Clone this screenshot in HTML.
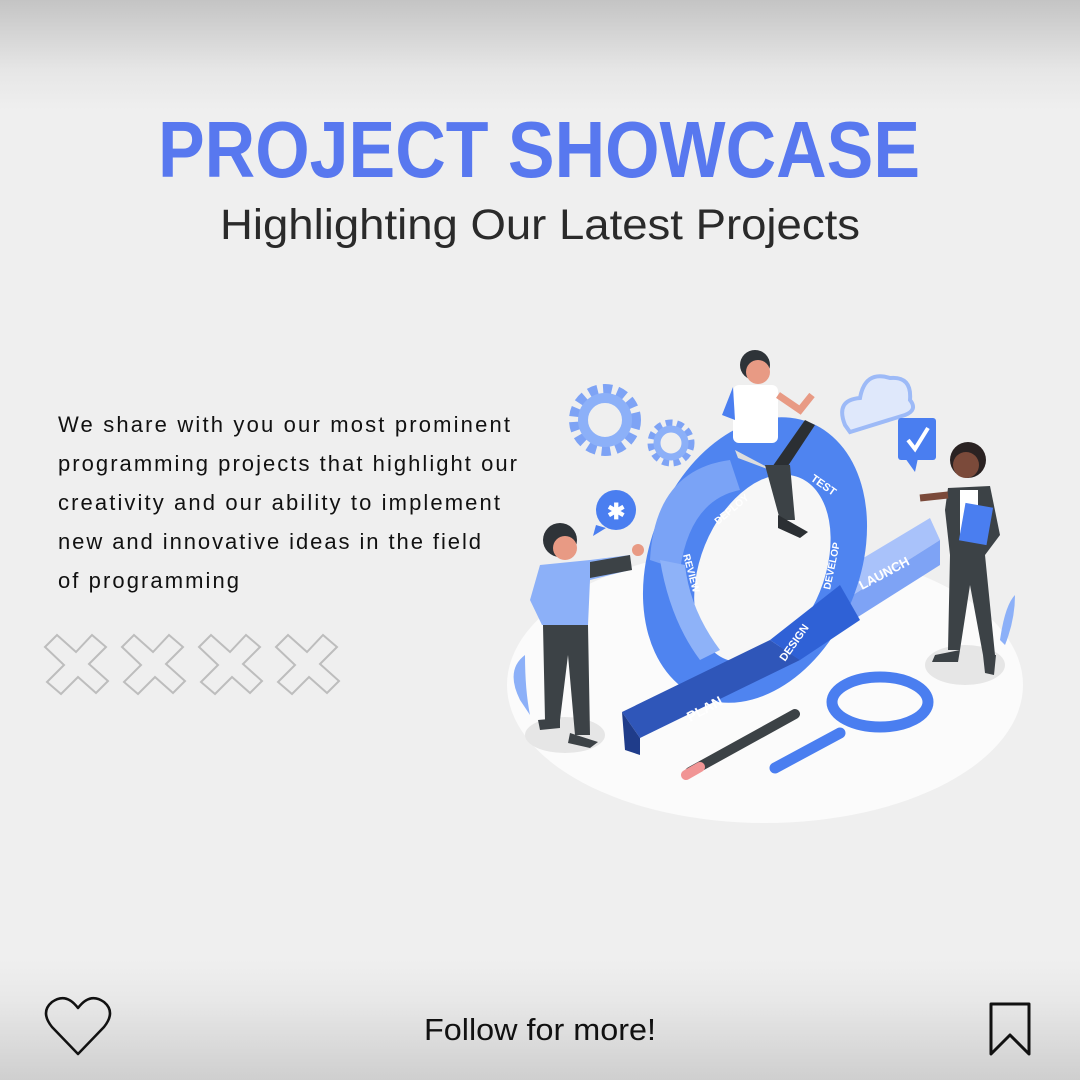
<!DOCTYPE html>
<html><head><meta charset="utf-8"><style>
html,body{margin:0;padding:0}
body{width:1080px;height:1080px;overflow:hidden;background:linear-gradient(#c4c4c4 0px,#e6e6e6 70px,#efefef 110px,#efefef 960px,#e8e8e8 1000px,#cfcfcf 1080px);font-family:"Liberation Sans",sans-serif}
svg{position:absolute;left:0;top:0}
</style></head><body>
<svg width="1080" height="1080" viewBox="0 0 1080 1080" xmlns="http://www.w3.org/2000/svg">
<text x="158" y="177" font-family="Liberation Sans" font-weight="bold" font-size="80" fill="#5878ef" textLength="762" lengthAdjust="spacingAndGlyphs">PROJECT SHOWCASE</text>
<text x="220" y="239" font-family="Liberation Sans" font-size="43" fill="#2a2a2a" textLength="640" lengthAdjust="spacingAndGlyphs">Highlighting Our Latest Projects</text>
<g font-family="Liberation Sans" font-size="22" fill="#111">
<text x="58" y="432" textLength="452" lengthAdjust="spacing">We share with you our most prominent</text>
<text x="58" y="471" textLength="459" lengthAdjust="spacing">programming projects that highlight our</text>
<text x="58" y="510" textLength="442" lengthAdjust="spacing">creativity and our ability to implement</text>
<text x="58" y="549" textLength="423" lengthAdjust="spacing">new and innovative ideas in the field</text>
<text x="58" y="588" textLength="181" lengthAdjust="spacing">of programming</text>
</g>
<g fill="none" stroke="#bdbdbd" stroke-width="2">
<path id="x1" d="M45,647 L57,635 L76,652 L92,635 L106,647 L89,664 L108,681 L96,693 L78,677 L61,694 L47,682 L64,665 Z"/>
<use href="#x1" x="77"/><use href="#x1" x="154"/><use href="#x1" x="231"/>
</g>
<ellipse cx="765" cy="685" rx="258" ry="138" fill="#fbfbfb"/>
<ellipse cx="565" cy="735" rx="40" ry="18" fill="#e6e6e6"/>
<ellipse cx="965" cy="665" rx="40" ry="20" fill="#e6e6e6"/>
<polygon points="835,575 930,518 940,540 845,600" fill="#a9c2fa"/>
<polygon points="845,600 940,540 940,565 850,622" fill="#7ea3f5"/>
<text x="862" y="590" font-size="13" fill="#fff" font-weight="bold" transform="rotate(-28 862 590)">LAUNCH</text>
<g transform="rotate(22 755 560)">
<ellipse cx="755" cy="560" rx="105" ry="148" fill="#4f84f0"/>
<ellipse cx="765" cy="565" rx="62" ry="98" fill="#f7f7f7"/>
</g>
<path d="M650,560 Q655,470 730,460 L740,490 Q690,500 680,570 Z" fill="#7aa3f6"/>
<path d="M660,560 Q670,620 700,660 L720,650 Q690,610 685,565 Z" fill="#8eb2f8"/>
<polygon points="622,712 770,640 800,660 640,738" fill="#2f56b9"/>
<polygon points="622,712 640,738 640,755 625,750" fill="#1f3c8a"/>
<polygon points="770,640 840,585 860,620 800,660" fill="#2f61d6"/>
<text x="690" y="722" font-size="14" fill="#fff" font-weight="bold" transform="rotate(-28 690 722)">PLAN</text>
<text x="785" y="662" font-size="11" fill="#fff" font-weight="bold" transform="rotate(-55 785 662)">DESIGN</text>
<text x="830" y="590" font-size="10" fill="#fff" font-weight="bold" transform="rotate(-78 830 590)">DEVELOP</text>
<text x="718" y="525" font-size="10" fill="#fff" font-weight="bold" transform="rotate(-40 718 525)">DEPLOY</text>
<text x="810" y="480" font-size="11" fill="#fff" font-weight="bold" transform="rotate(35 810 480)">TEST</text>
<text x="683" y="555" font-size="10" fill="#fff" font-weight="bold" transform="rotate(75 683 555)">REVIEW</text>
<circle cx="605" cy="420" r="28" fill="none" stroke="#7ea3f5" stroke-width="16" stroke-dasharray="8 5"/>
<circle cx="605" cy="420" r="22" fill="none" stroke="#8cb0f8" stroke-width="10"/>
<circle cx="671" cy="443" r="18" fill="none" stroke="#7ea3f5" stroke-width="11" stroke-dasharray="6 4"/>
<circle cx="671" cy="443" r="14" fill="none" stroke="#8cb0f8" stroke-width="7"/>
<path d="M845,425 Q835,400 860,398 Q865,370 890,378 Q912,376 910,400 Q918,410 905,415 L850,432 Z" fill="#dfe8fb" stroke="#9dbaf7" stroke-width="4"/>
<rect x="898" y="418" width="38" height="42" rx="3" fill="#4a7ef0"/>
<polygon points="905,458 915,472 918,458" fill="#4a7ef0"/>
<path d="M908,440 L915,449 L928,428" stroke="#fff" stroke-width="4" fill="none"/>
<circle cx="616" cy="510" r="20" fill="#4a7ef0"/>
<polygon points="596,525 593,536 606,528" fill="#4a7ef0"/>
<text x="607" y="519" font-size="22" fill="#fff" font-weight="bold">✱</text>
<circle cx="560" cy="540" r="17" fill="#2e3338"/>
<circle cx="565" cy="548" r="12" fill="#e89a84"/>
<path d="M540,565 L590,560 L630,555 L630,570 L590,580 L588,625 L542,625 L530,600 Z" fill="#8cb0f8"/>
<path d="M590,562 L630,555 L632,570 L590,578 Z" fill="#3c4246"/>
<circle cx="638" cy="550" r="6" fill="#e89a84"/>
<path d="M543,625 L588,625 L590,735 L575,735 L568,655 L560,720 L545,720 Z" fill="#3c4246"/>
<path d="M538,720 L560,718 L560,728 L540,730 Z M570,733 L598,742 L590,748 L568,743 Z" fill="#3c4246"/>
<circle cx="755" cy="365" r="15" fill="#2e3338"/>
<circle cx="758" cy="372" r="12" fill="#e89a84"/>
<rect x="733" y="385" width="45" height="58" rx="6" fill="#fff"/>
<path d="M733,387 L722,415 L735,420 Z" fill="#4a7ef0"/>
<path d="M778,395 L800,410 L812,395" stroke="#e89a84" stroke-width="7" fill="none"/>
<polygon points="770,470 805,420 815,425 782,475" fill="#2b2f33"/>
<polygon points="735,450 782,475 770,470 738,458" fill="#ddd"/>
<path d="M765,465 L780,520 L795,520 L790,465 Z" fill="#3c4246"/>
<path d="M778,515 L808,532 L800,538 L778,528 Z" fill="#2b2f33"/>
<circle cx="968" cy="460" r="18" fill="#2a2222"/>
<circle cx="966" cy="465" r="13" fill="#7b4a3a"/>
<path d="M948,488 L990,486 L1000,535 L985,555 L950,555 L945,510 Z" fill="#3c4246"/>
<rect x="960" y="490" width="18" height="50" fill="#fff"/>
<rect x="962" y="505" width="28" height="38" fill="#4a7ef0" transform="rotate(10 976 524)"/>
<path d="M948,495 L920,498" stroke="#7b4a3a" stroke-width="7"/>
<path d="M950,555 L985,555 L995,655 L983,655 L970,585 L960,650 L948,650 Z" fill="#3c4246"/>
<path d="M935,655 L960,650 L958,662 L932,662 Z M983,655 L996,655 L994,675 L985,673 Z" fill="#3c4246"/>
<path d="M520,700 Q505,670 525,655 Q525,690 530,715 Z" fill="#8cb0f8"/>
<path d="M1000,640 Q1005,605 1015,595 Q1015,620 1005,645 Z" fill="#8cb0f8"/>
<line x1="690" y1="772" x2="795" y2="714" stroke="#3c4246" stroke-width="10" stroke-linecap="round"/>
<line x1="686" y1="775" x2="700" y2="767" stroke="#f19595" stroke-width="10" stroke-linecap="round"/>
<line x1="775" y1="768" x2="840" y2="733" stroke="#4a7ef0" stroke-width="11" stroke-linecap="round"/>
<ellipse cx="880" cy="702" rx="48" ry="25" fill="none" stroke="#4a7ef0" stroke-width="11"/>
<path d="M78,1054 L52,1027 Q40,1012 52,1002 Q66,992 78,1008 Q90,992 104,1002 Q116,1012 104,1027 Z" fill="none" stroke="#111" stroke-width="2.5" stroke-linejoin="round"/>
<text x="424" y="1040" font-family="Liberation Sans" font-size="31" fill="#111" textLength="232" lengthAdjust="spacingAndGlyphs">Follow for more!</text>
<path d="M991,1004 L1029,1004 L1029,1054 L1010,1035 L991,1054 Z" fill="none" stroke="#111" stroke-width="3" stroke-linejoin="round"/>
</svg>
</body></html>
